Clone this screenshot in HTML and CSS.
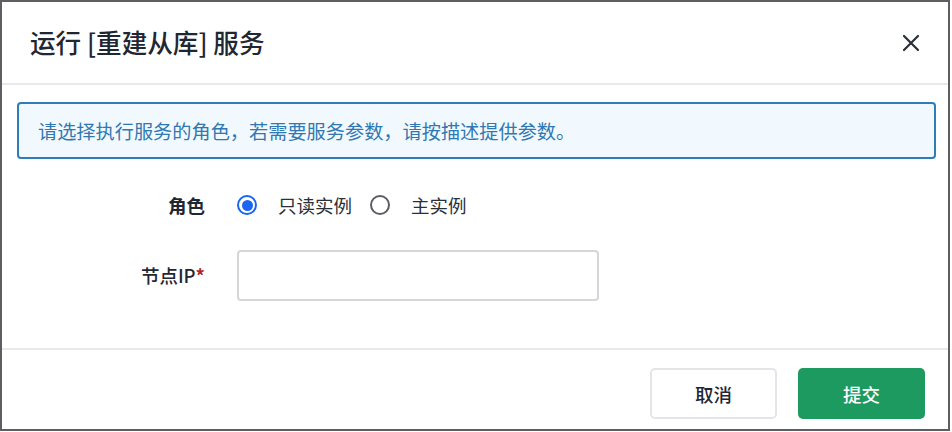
FILE: index.html
```html
<!DOCTYPE html>
<html lang="zh-CN">
<head>
<meta charset="utf-8">
<title>运行 [重建从库] 服务</title>
<link rel="stylesheet" href="styles.css">
</head>
<body>
<div class="dialog">
  <div class="header">
    <h2 class="title">运行 [重建从库] 服务</h2>
    <button class="close" aria-label="关闭">
      <svg width="18" height="18" viewBox="0 0 18 18"><path d="M2 2 L16 16 M16 2 L2 16" stroke="#2b2f36" stroke-width="2.2" stroke-linecap="round" fill="none"/></svg>
    </button>
  </div>
  <div class="body">
    <div class="alert">请选择执行服务的角色，若需要服务参数，请按描述提供参数。</div>
    <div class="form">
      <div class="row">
        <div class="label bold">角色</div>
        <div class="control radios">
          <label class="radio"><span class="dot checked"></span><span>只读实例</span></label>
          <label class="radio"><span class="dot"></span><span>主实例</span></label>
        </div>
      </div>
      <div class="row">
        <div class="label medium">节点IP<span class="req">*</span></div>
        <div class="control"><div class="input"></div></div>
      </div>
    </div>
  </div>
  <div class="footer">
    <button class="btn cancel">取消</button>
    <button class="btn submit">提交</button>
  </div>
</div>
</body>
</html>
```

FILE: styles.css
```css
* { box-sizing: border-box; }
html, body { margin: 0; padding: 0; background: #fff; }
body {
  font-family: "Noto Sans CJK SC", "Noto Sans", sans-serif;
  color: #1f2733;
  font-size: 18.5px;
}
.dialog {
  width: 950px;
  height: 431px;
  border: 2px solid #5c5e62;
  display: flex;
  flex-direction: column;
  background: #fff;
}
.header {
  height: 83px;
  border-bottom: 2px solid #e8e9eb;
  display: flex;
  align-items: center;
  justify-content: space-between;
  padding: 0 28px 0 28px;
}
.title {
  margin: 0;
  font-size: 25.6px;
  font-weight: 500;
  color: #1f2733;
  line-height: 1;
  padding-bottom: 2px;
}
.close {
  border: 0;
  background: none;
  padding: 0;
  width: 18px;
  height: 18px;
  display: flex;
  margin-right: 0;
}
.body {
  flex: 1;
  padding: 17px 12px 0 15px;
  border-bottom: 2px solid #e8e9eb;
}
.alert {
  height: 57px;
  border: 2px solid #2f7db8;
  border-radius: 4px;
  background: #f2f9fe;
  color: #2f78b2;
  display: flex;
  align-items: center;
  padding-left: 19px;
  font-size: 19.2px;
}
.form {
  padding-top: 21px;
  display: flex;
  flex-direction: column;
  gap: 20px;
}
.row {
  height: 50px;
  display: flex;
  align-items: center;
  gap: 32px;
}
.label {
  width: 188px;
  text-align: right;
  font-size: 18.5px;
  color: #1f2733;
}
.label.bold { font-weight: 600; }
.label.medium { font-weight: 500; }
.req { color: #b4232c; font-weight: 700; }
.radios { display: flex; align-items: center; gap: 18px; }
.radio { display: flex; align-items: center; gap: 21px; color: #2a2f38; }
.dot {
  width: 20px;
  height: 20px;
  border-radius: 50%;
  border: 2px solid #5a5d63;
  display: flex;
  align-items: center;
  justify-content: center;
}
.dot.checked { border-color: #1c64f2; }
.dot.checked::after {
  content: "";
  width: 11px;
  height: 11px;
  border-radius: 50%;
  background: #1c64f2;
}
.input {
  width: 362px;
  height: 51px;
  border: 2px solid #d4d6da;
  border-radius: 4px;
  background: #fff;
}
.footer {
  height: 79px;
  display: flex;
  justify-content: flex-end;
  align-items: flex-start;
  gap: 21px;
  padding: 18px 23px 0 0;
}
.btn {
  width: 127px;
  height: 51px;
  border-radius: 5px;
  font-family: inherit;
  font-size: 18.5px;
  font-weight: 500;
  cursor: pointer;
}
.cancel {
  background: #fff;
  border: 2px solid #e3e5e8;
  color: #1f2733;
}
.submit {
  background: #1d9a5f;
  border: 0;
  color: #fff;
}
```
